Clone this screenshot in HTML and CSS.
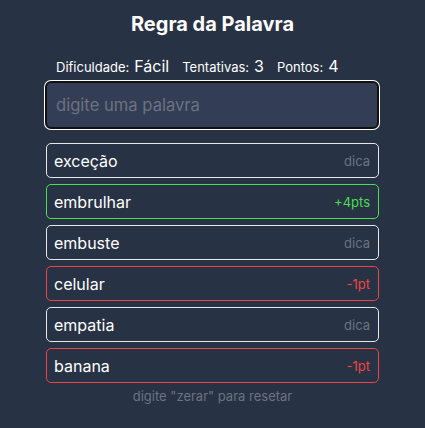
FILE: index.html
```html
<!DOCTYPE html>
<html lang="pt">
<head>
<meta charset="utf-8">
<title>Regra da Palavra</title>
<link rel="stylesheet" href="styles.css">
</head>
<body>
<main class="app">
  <h1 class="title">Regra da Palavra</h1>
  <div class="stats">
    <span class="stat"><span class="label">Dificuldade:</span><span class="value">Fácil</span></span>
    <span class="stat"><span class="label">Tentativas:</span><span class="value">3</span></span>
    <span class="stat"><span class="label">Pontos:</span><span class="value">4</span></span>
  </div>
  <div class="input-box"><span class="placeholder">digite uma palavra</span></div>
  <ul class="list">
    <li class="item"><span class="word">exceção</span><span class="tag hint">dica</span></li>
    <li class="item ok"><span class="word">embrulhar</span><span class="tag good">+4pts</span></li>
    <li class="item"><span class="word">embuste</span><span class="tag hint">dica</span></li>
    <li class="item bad"><span class="word">celular</span><span class="tag fail">-1pt</span></li>
    <li class="item"><span class="word">empatia</span><span class="tag hint">dica</span></li>
    <li class="item bad"><span class="word">banana</span><span class="tag fail">-1pt</span></li>
  </ul>
  <p class="footer">digite "zerar" para resetar</p>
</main>
</body>
</html>
```

FILE: styles.css
```css
* { box-sizing: border-box; }
html, body { margin: 0; padding: 0; }
body {
  background: #283245;
  font-family: Inter, "Noto Sans", sans-serif;
  color: #ffffff;
  width: 425px;
  height: 428px;
  overflow: hidden;
}
.app {
  width: 333px;
  margin: 0 auto;
  padding-top: 10px;
  display: flex;
  flex-direction: column;
}
.title {
  margin: 0;
  font-size: 20px;
  font-weight: 700;
  line-height: 28px;
  text-align: center;
}
.stats {
  margin-top: 17px;
  padding-left: 10px;
  display: flex;
  align-items: baseline;
  gap: 13px;
  height: 22px;
  line-height: 22px;
}
.stat {
  display: flex;
  align-items: baseline;
  gap: 5px;
}
.label { font-size: 13px; }
.value { font-size: 16px; }
.input-box {
  margin-top: 4px;
  margin-left: -1px;
  height: 48px;
  border: 2px solid #111111;
  box-shadow: 0 0 0 1px #ffffff;
  border-radius: 6px;
  background: #333d55;
  display: flex;
  align-items: center;
  padding: 0 9px;
}
.placeholder {
  font-size: 16.6px;
  color: #6b7280;
}
.list {
  list-style: none;
  margin: 14px 0 0 0;
  padding: 0;
  display: flex;
  flex-direction: column;
  gap: 6px;
}
.item {
  height: 35px;
  border: 1px solid #e5e7eb;
  border-radius: 5px;
  display: flex;
  align-items: center;
  justify-content: space-between;
  padding: 0 8px 0 7px;
}
.item.ok { border-color: #4ade50; }
.item.bad { border-color: #ef4444; }
.word { font-size: 16px; color: #ffffff; }
.tag { font-size: 13px; }
.hint { color: #6b7280; }
.good { color: #4ade50; }
.fail { color: #ef4444; }
.footer {
  margin: 5px 0 0 0;
  text-align: center;
  font-size: 13px;
  color: #6b7280;
}
```
